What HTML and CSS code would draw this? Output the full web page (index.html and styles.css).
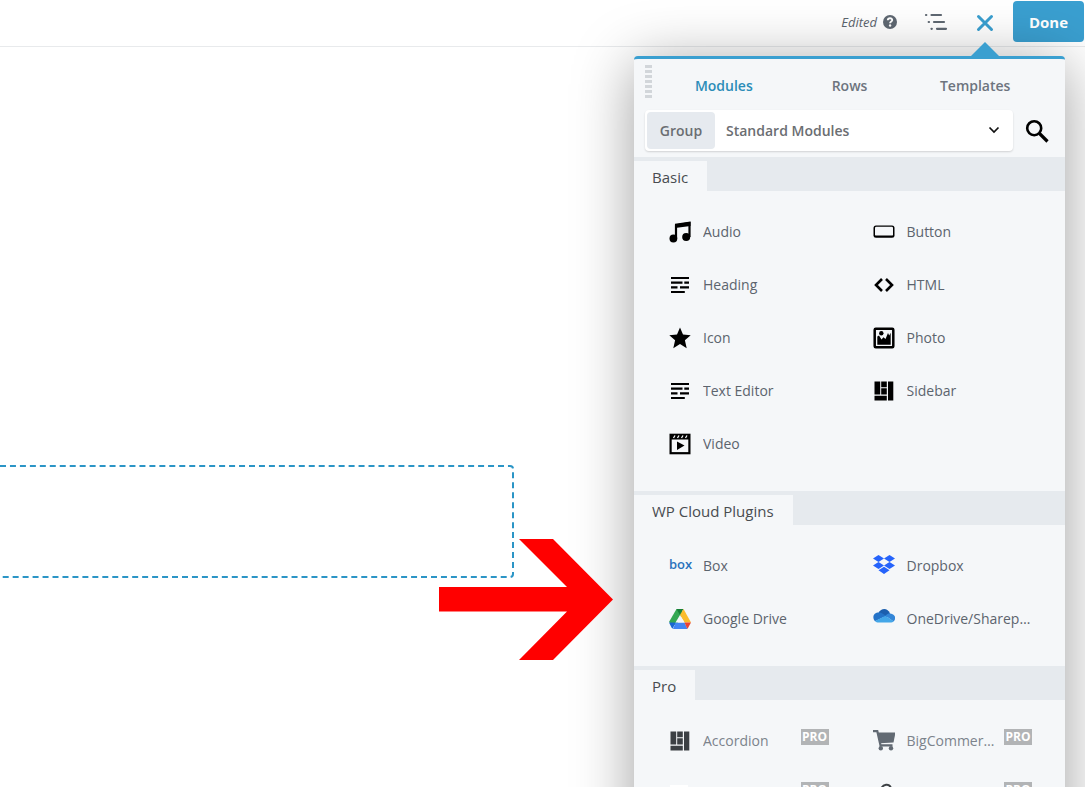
FILE: index.html
```html
<!DOCTYPE html>
<html lang="en">
<head>
<meta charset="utf-8">
<title>Page Builder</title>
<link rel="stylesheet" href="styles.css">
</head>
<body>
<svg class="sprite" aria-hidden="true">
  <symbol id="lines" viewBox="0 0 22 22"><path d="M2 4h18M2 8.700h11.500M15.300 8.700H20M2 13.300h6.500M11 13.300H20M2 18h13.800" stroke="currentColor" stroke-width="2.200"/></symbol>
  <symbol id="blocks" viewBox="0 0 22 22"><path d="M1.500 1.500h5.700v13H1.500zM8.200 1.500h5.600v5.700H8.200zM8.200 8.300h5.600v6.200H8.200zM15 1.500h5.300v19H15zM1.500 15.700h12.300v4.800H1.500z" fill="currentColor"/></symbol>
</svg>

<header class="topbar">
  <span class="status">Edited</span>
  <button class="icon-button help" aria-label="Help">
    <svg width="14" height="14" viewBox="0 0 14 14"><circle cx="7" cy="7" r="7" fill="currentColor"/><path d="M4.800 5.200C5 2.600 9.300 2.700 9.200 5.200 9.100 6.600 7.100 6.500 7.100 8.300" fill="none" stroke="#fff" stroke-width="1.900"/><circle cx="7.100" cy="10.500" r="1.200" fill="#fff"/></svg>
  </button>
  <button class="icon-button outline" aria-label="Outline">
    <svg width="24" height="18" viewBox="0 0 24 18" fill="none" stroke="currentColor" stroke-width="2.200" stroke-linecap="round"><path d="M2 2h.3M7.500 2h9.500M4.700 9h.3M10 9h10M7.500 15.800h.3M13 15.800h9"/></svg>
  </button>
  <button class="icon-button close" aria-label="Close panel">
    <svg width="18" height="18" viewBox="0 0 18 18" fill="none" stroke="currentColor" stroke-width="3" stroke-linecap="round"><path d="M2.500 2.500l13 13M15.500 2.500l-13 13"/></svg>
  </button>
  <button class="done">Done</button>
</header>

<main class="canvas">
  <div class="row-outline"></div>
</main>

<svg class="pointer" width="174" height="121" viewBox="0 0 174 121" aria-hidden="true"><path d="M80 0h34l60 60.500L114 121H80l48-48.500H0V48h128z" fill="#f00"/></svg>

<aside class="panel">
  <div class="panel-head">
    <div class="tabs">
      <span class="grip"></span>
      <nav class="tab-list">
        <button class="tab active">Modules</button>
        <button class="tab">Rows</button>
        <button class="tab">Templates</button>
      </nav>
    </div>
    <div class="filter">
      <div class="group-box">
        <label class="group-label" for="group">Group</label>
        <select class="group-select" id="group"><option>Standard Modules</option></select>
        <svg class="chevron" width="12" height="8" viewBox="0 0 12 8" fill="none" stroke="#111" stroke-width="1.700"><path d="M1.500 1.500L6 6l4.500-4.500"/></svg>
      </div>
      <button class="search" aria-label="Search">
        <svg width="24" height="24" viewBox="0 0 24 24" fill="none" stroke="#000"><circle cx="9.200" cy="9.200" r="7" stroke-width="2.600"/><path d="M14.500 14.500l8 8" stroke-width="3.200"/></svg>
      </button>
    </div>
  </div>

  <section>
    <header class="section-head"><h2 class="section-title">Basic</h2></header>
    <ul class="modules">
      <li class="module">
        <svg class="icon" viewBox="0 0 22 22"><path d="M7 17V4.500L20.500 2v14" fill="none" stroke="currentColor" stroke-width="2.200"/><path d="M6 2.800L21.500.500V5L6 7z" fill="currentColor"/><circle cx="4.400" cy="17.500" r="3.900" fill="currentColor"/><circle cx="17.200" cy="16" r="4" fill="currentColor"/></svg>
        <span class="name">Audio</span>
      </li>
      <li class="module">
        <svg class="icon" viewBox="0 0 22 22"><rect x=".5" y="4.500" width="21" height="12.300" rx="2.500" fill="currentColor"/><rect x="2" y="5.800" width="18" height="8.800" rx="1.200" fill="#f5f7f9"/></svg>
        <span class="name">Button</span>
      </li>
      <li class="module">
        <svg class="icon"><use href="#lines"/></svg>
        <span class="name">Heading</span>
      </li>
      <li class="module">
        <svg class="icon" viewBox="0 0 22 22" fill="none" stroke="currentColor" stroke-width="2.600"><path d="M9 5l-6 6 6 6M13 5l6 6-6 6"/></svg>
        <span class="name">HTML</span>
      </li>
      <li class="module">
        <svg class="icon" viewBox="0 0 22 22"><path d="M11 .600l3 7 7.700.700-5.800 5 1.800 7.900L11 17l-6.700 4.200 1.800-7.900-5.800-5L8 7.600z" fill="currentColor"/></svg>
        <span class="name">Icon</span>
      </li>
      <li class="module">
        <svg class="icon" viewBox="0 0 22 22"><rect x="1.700" y="1.700" width="18.600" height="18.600" rx="1" fill="none" stroke="currentColor" stroke-width="2.500"/><path d="M4.300 17.700V9.500l1.700-1 2.500 4 2-2.200 2 1.700 2.500-6 1.200 2.500 1.500-2.800v12z" fill="currentColor"/><circle cx="8.300" cy="6.300" r="2.200" fill="currentColor"/></svg>
        <span class="name">Photo</span>
      </li>
      <li class="module">
        <svg class="icon"><use href="#lines"/></svg>
        <span class="name">Text Editor</span>
      </li>
      <li class="module">
        <svg class="icon"><use href="#blocks"/></svg>
        <span class="name">Sidebar</span>
      </li>
      <li class="module">
        <svg class="icon" viewBox="0 0 22 22"><rect x="1.600" y="1.800" width="18.800" height="18.400" fill="none" stroke="currentColor" stroke-width="2.200"/><path d="M1 1h20v5.500H1zM8 8.500l7.500 4L8 17z" fill="currentColor"/><path d="M4.500 5L6 2.500M8.500 5L10 2.500M12.500 5L14 2.500M16.500 5L18 2.500" stroke="#f5f7f9" stroke-width="1.300"/></svg>
        <span class="name">Video</span>
      </li>
    </ul>
  </section>

  <section>
    <header class="section-head"><h2 class="section-title">WP Cloud Plugins</h2></header>
    <ul class="modules">
      <li class="module">
        <span class="icon box-logo">box</span>
        <span class="name">Box</span>
      </li>
      <li class="module">
        <svg class="icon" viewBox="0 0 22 22" fill="#2563fb"><path d="M5.500 0L11 3.500 5.500 7 0 3.500zM16.500 0L22 3.500 16.500 7 11 3.500zM5.500 7L11 10.500 5.500 14 0 10.500zM16.500 7l5.500 3.500-5.500 3.500-5.500-3.500zM11 11.700l5.500 3.500L11 19l-5.500-3.800z"/></svg>
        <span class="name">Dropbox</span>
      </li>
      <li class="module">
        <svg class="icon" viewBox="0 0 22 22"><path d="M7.500 1H11l3 5-6.500 11H4L0 14z" fill="#34a853"/><path d="M7.500 1h7L11 7z" fill="#188038"/><path d="M14.500 1L22 14.500h-6.500L11 7z" fill="#fbbc2c"/><path d="M0 14.500h6.500L3.800 20.500Q3 20.500 2.500 19.500z" fill="#1967d2"/><path d="M6.500 14.500h9l3 6.500H4z" fill="#4285f4"/><path d="M15.500 14.500H22l-3 5.500-.8.800z" fill="#ea4335"/><path d="M11 7l4.500 7.500h-9z" fill="#f5f7f9"/></svg>
        <span class="name">Google Drive</span>
      </li>
      <li class="module">
        <svg class="icon" viewBox="0 0 22 22"><path d="M5.500 5C8-.500 15-.500 17 5.500l-4 5z" fill="#1c5fae"/><path d="M2 13.300C-1.500 9 1 4.500 6 4.600c2.500 0 4 1.200 7 3.400z" fill="#2473c8"/><path d="M12.500 7.800C15 5 16 5.500 17.300 5.500 22.500 6 23.500 11 20.500 13.500z" fill="#3386d8"/><path d="M2 13l10.500-5.200 8 5.400c-.7 1-1.800 1.300-3 1.300h-12C4 14.500 3 14 2 13z" fill="#43a6e8"/></svg>
        <span class="name">OneDrive/Sharepoint</span>
      </li>
    </ul>
  </section>

  <section>
    <header class="section-head"><h2 class="section-title">Pro</h2></header>
    <ul class="modules pro">
      <li class="module">
        <svg class="icon"><use href="#blocks"/></svg>
        <span class="name">Accordion</span>
        <span class="badge">PRO</span>
      </li>
      <li class="module">
        <svg class="icon cart" viewBox="0 0 22 22"><path d="M0 1.200h4.300L7.500 15.300H19.500" fill="none" stroke="currentColor" stroke-width="2.200"/><path d="M4.300 2.500H22.500L20.500 12.500 6.700 13.200z" fill="currentColor"/><circle cx="7.800" cy="18.200" r="2.200" fill="currentColor"/><circle cx="18" cy="18.200" r="2.200" fill="currentColor"/></svg>
        <span class="name">BigCommerce</span>
        <span class="badge">PRO</span>
      </li>
      <li class="module">
        <svg class="icon" viewBox="0 0 22 22"><rect x="1" y="2" width="18" height="16" fill="#fff"/></svg>
        <span class="name"></span>
        <span class="badge">PRO</span>
      </li>
      <li class="module">
        <svg class="icon" viewBox="0 0 22 22" fill="none" stroke="currentColor" stroke-width="2"><path d="M8 6C10 1 16 0 18 5v8H6z"/></svg>
        <span class="name"></span>
        <span class="badge">PRO</span>
      </li>
    </ul>
  </section>
</aside>
</body>
</html>
```

FILE: styles.css
```css
* {
  box-sizing: border-box;
}

body {
  position: relative;
  height: 100vh;
  margin: 0;
  overflow: hidden;
  background: #fff;
  color: #5c646e;
  font: 14px/20px "Open Sans", "Noto Sans", sans-serif;
}

button,
select {
  border: 0;
  padding: 0;
  background: none;
  color: inherit;
  font: inherit;
}

svg {
  display: block;
}

.sprite {
  position: absolute;
  width: 0;
  height: 0;
}

.topbar {
  display: flex;
  align-items: center;
  justify-content: flex-end;
  height: 47px;
  padding: 0 1px 3px 0;
  border-bottom: 1px solid #e8eaec;
}

.status {
  margin-right: 6px;
  font-size: 13px;
  font-style: italic;
}

.icon-button {
  color: #5f6872;
}

.outline {
  margin-left: 27px;
}

.close {
  margin: 2px 19px 0 28px;
  color: #3a9fd0;
}

.done {
  align-self: flex-start;
  width: 71px;
  height: 41px;
  margin-top: 1px;
  border-radius: 4px;
  background: #3a9fd0;
  color: #fff;
  font-size: 15px;
  font-weight: 700;
}

.canvas {
  padding-top: 418px;
}

.row-outline {
  width: 47.4%;
  height: 113px;
  border: 2px dashed #2b95c6;
  border-left: 0;
  border-radius: 0 4px 4px 0;
}

.pointer {
  position: absolute;
  z-index: 2;
  top: 539px;
  left: 439px;
}

.panel {
  position: absolute;
  z-index: 1;
  top: 56px;
  right: 20px;
  width: 431px;
  padding-bottom: 80px;
  border-top: 3px solid #3a9fd0;
  border-radius: 4px;
  background: #f5f7f9;
  box-shadow: 0 8px 60px rgba(0, 0, 0, 0.38);
}

.panel::before {
  content: "";
  position: absolute;
  right: 65px;
  bottom: 100%;
  margin-bottom: 2px;
  border: 15px solid transparent;
  border-top: 0;
  border-bottom-color: #3a9fd0;
}

.panel-head {
  padding: 0 11px 6px;
}

.tabs {
  display: flex;
  align-items: center;
  height: 51px;
}

.grip {
  width: 7px;
  height: 34px;
  margin-bottom: 6px;
  background: repeating-linear-gradient(#d2d6da 0 3px, transparent 3px 5px);
}

.tab-list {
  display: flex;
  flex: 1;
  margin: 2px 16px 0 9px;
}

.tab {
  flex: 1;
  color: #6d747e;
  font-weight: 600;
}

.tab.active {
  color: #2c8db8;
}

.filter {
  display: flex;
  align-items: center;
}

.group-box {
  display: flex;
  position: relative;
  flex: 1;
  height: 41px;
  padding: 2px;
  border-radius: 4px;
  background: #fff;
  box-shadow: 0 1px 2px rgba(0, 0, 0, 0.15);
  color: #6b6e72;
  font-weight: 600;
}

.group-label {
  display: grid;
  place-items: center;
  width: 68px;
  border-radius: 4px;
  background: #e6eaef;
}

.group-select {
  flex: 1;
  padding-left: 11px;
  appearance: none;
}

.chevron {
  position: absolute;
  top: 16px;
  right: 13px;
  pointer-events: none;
}

.search {
  margin: 0 5px 0 12px;
}

.section-head {
  display: flex;
  height: 34px;
  padding-top: 4px;
  background: #e6eaee;
}

.section-title {
  margin: 0;
  padding: 0 19px 0 18px;
  background: #f5f7f9;
  color: #484c50;
  font-size: 15px;
  font-weight: 400;
  line-height: 32px;
}

.modules {
  display: grid;
  grid-template-columns: repeat(2, minmax(0, 1fr));
  grid-auto-rows: 53px;
  margin: 0;
  padding: 14px 12px 21px;
  list-style: none;
}

.module {
  display: flex;
  align-items: center;
  padding: 0 21px 0 23px;
}

.icon {
  flex: none;
  width: 22px;
  height: 22px;
  margin-right: 12px;
  color: #000;
}

.box-logo {
  color: #2a72bd;
  font: 600 13px/18px "Open Sans", sans-serif;
}

.name {
  flex: 1;
  overflow: hidden;
  text-overflow: ellipsis;
  white-space: nowrap;
}

.pro .icon {
  color: #3c4044;
}

.pro .cart {
  color: #626a73;
}

.pro .name {
  color: #7c838c;
}

.badge {
  width: 28px;
  height: 16px;
  margin: 0 0 8px 8px;
  background: #b2b4b6;
  color: #fff;
  font-size: 12px;
  font-weight: 700;
  line-height: 16px;
  text-align: center;
}
```
